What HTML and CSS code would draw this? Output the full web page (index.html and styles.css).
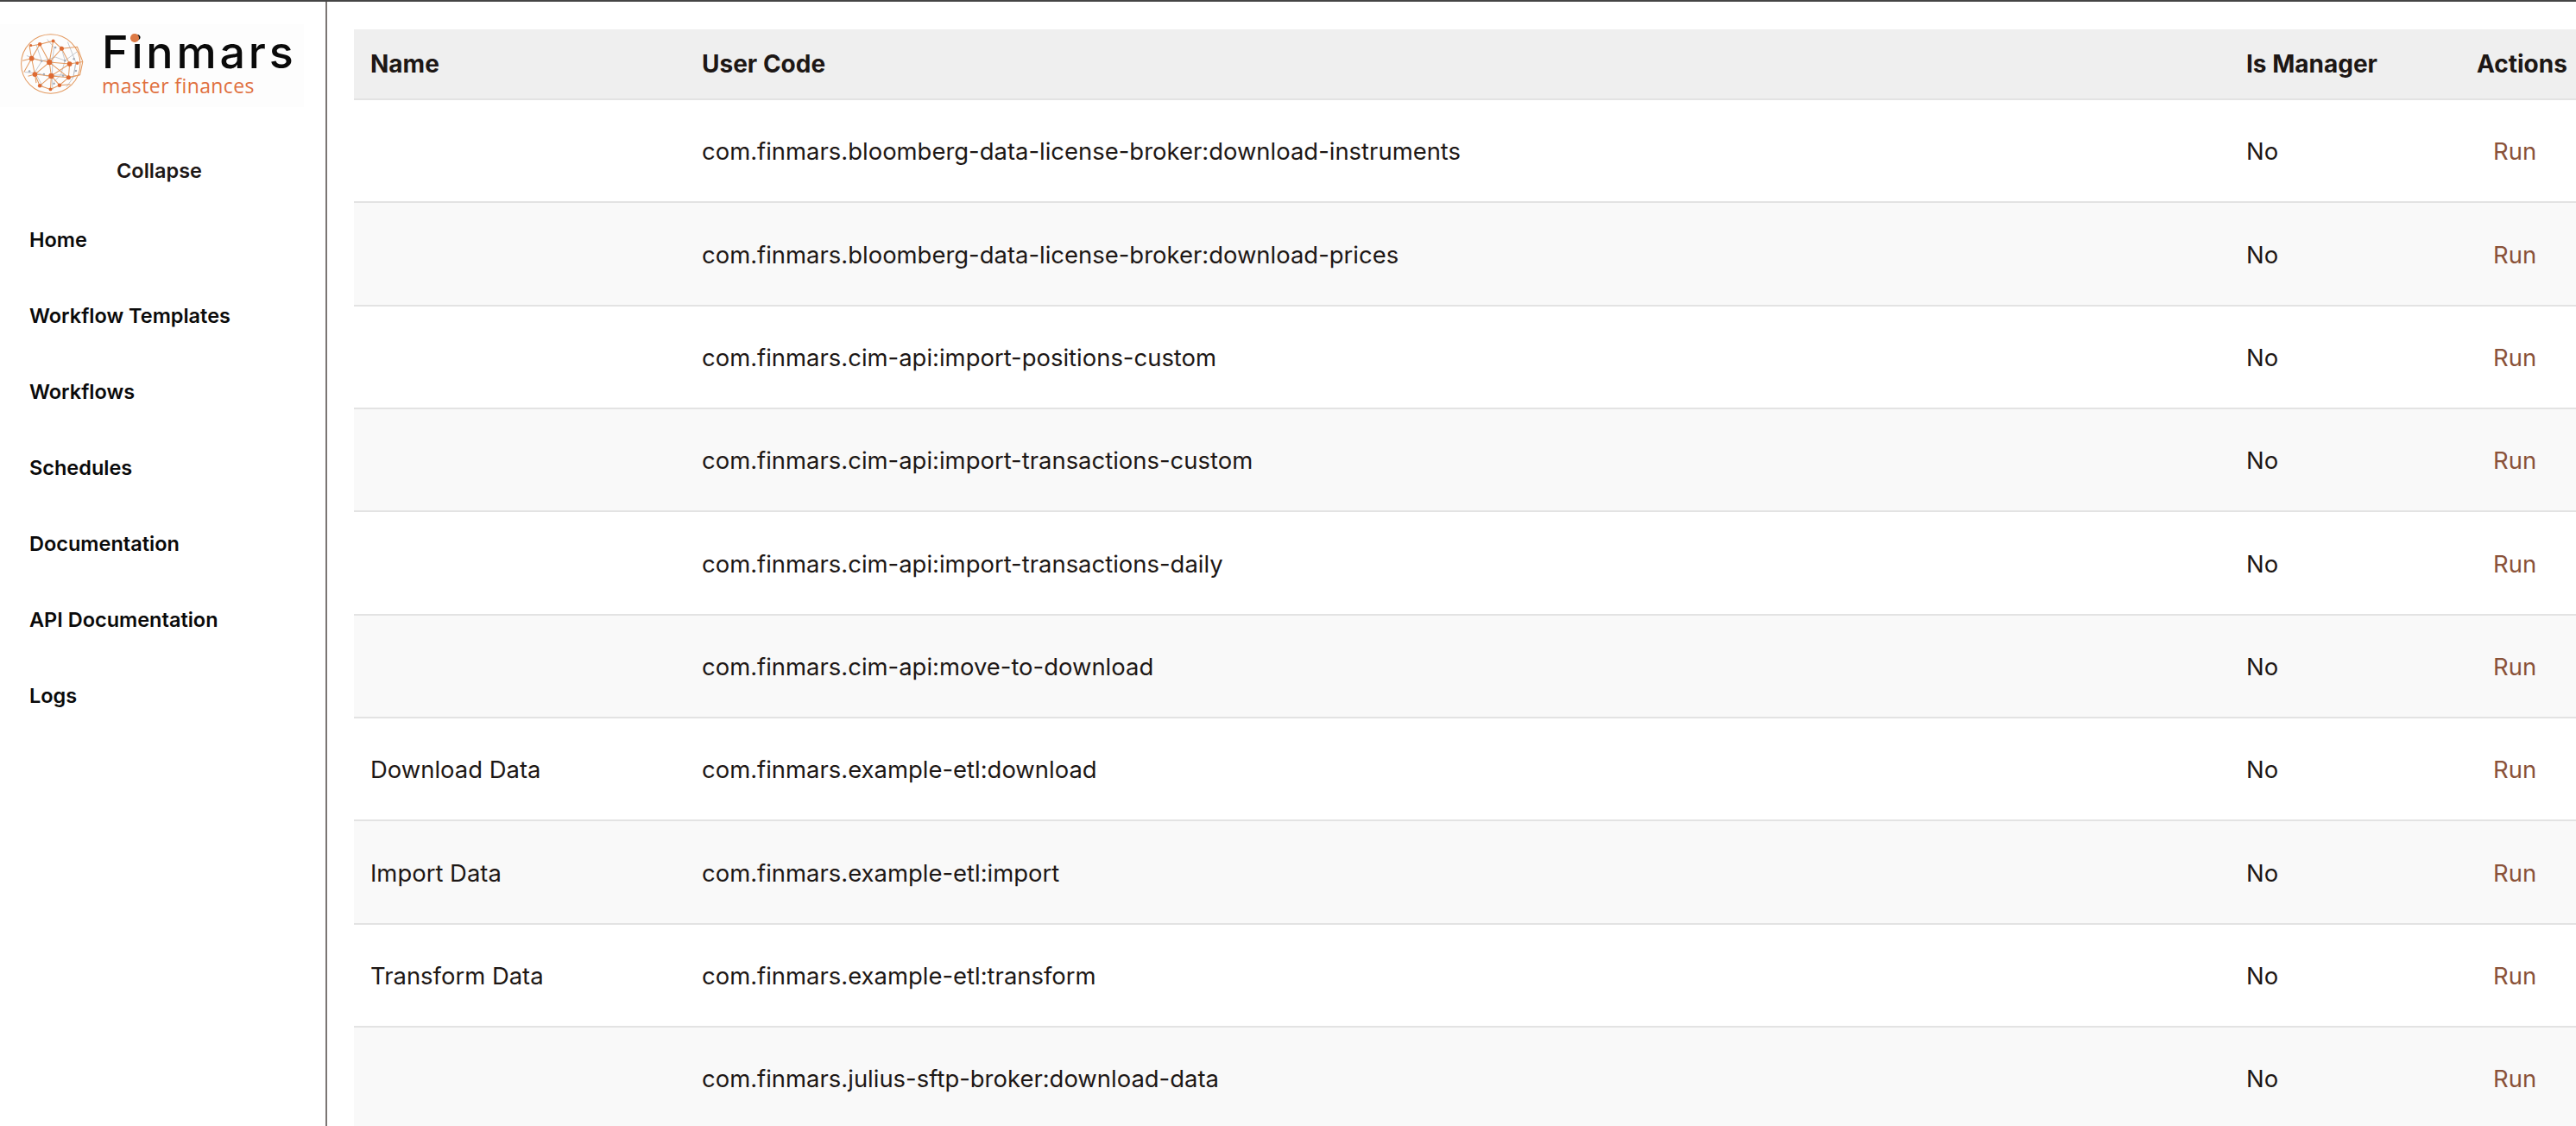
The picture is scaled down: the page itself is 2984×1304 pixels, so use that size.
FILE: index.html
```
<!DOCTYPE html>
<html lang="en">
<head>
<meta charset="utf-8">
<title>Finmars Workflow</title>
<link rel="stylesheet" href="styles.css">
</head>
<body>
<div class="app">
  <aside class="sidebar">
    <div class="logo">
      <svg class="globe" viewBox="0 0 240 240" xmlns="http://www.w3.org/2000/svg" aria-hidden="true">
        <g fill="none" stroke="#b9bdc5" stroke-width="2.6">
          <path d="M25 90L80 110L130 95L165 108L210 75"/>
          <path d="M18 150L70 155L100 165L150 160L195 170L205 115"/>
          <path d="M100 30L125 60L120 100L118 170L120 215"/>
          <path d="M60 50L80 110L55 150L85 205"/>
          <path d="M150 55L165 108L150 160L125 185"/>
          <path d="M175 40L205 115L195 170L170 205"/>
        </g>
        <g fill="none" stroke="#e3995f" stroke-width="3.2">
          <circle cx="113" cy="120" r="108"/>
          <path d="M10 108L43 100L108 114L182 120L230 112"/>
          <path d="M30 165L55 158L115 164L178 170L220 160"/>
          <path d="M35 55L73 48L122 36L153 64L182 120L178 170L145 198L112 213L73 200L55 158L43 100L73 48"/>
          <path d="M122 36L108 114L115 164L112 213"/>
          <path d="M153 64L108 114L55 158"/>
          <path d="M73 48L108 114L178 170"/>
          <path d="M153 64L210 58L230 112L220 160L178 170"/>
          <path d="M182 120L115 164L73 200"/>
          <path d="M115 164L145 198"/>
          <path d="M35 55L43 100L15 150M55 158L60 190M145 198L185 195"/>
        </g>
        <g fill="#dd6a33">
          <circle cx="43" cy="100" r="9"/><circle cx="108" cy="114" r="10"/><circle cx="182" cy="120" r="9"/>
          <circle cx="55" cy="158" r="9"/><circle cx="115" cy="164" r="10"/><circle cx="178" cy="170" r="8"/>
          <circle cx="73" cy="48" r="7"/><circle cx="153" cy="64" r="8"/><circle cx="122" cy="36" r="6"/>
          <circle cx="40" cy="52" r="5"/><circle cx="145" cy="198" r="7"/><circle cx="73" cy="200" r="7"/>
          <circle cx="112" cy="213" r="6"/><circle cx="210" cy="117" r="6"/>
        </g>
        <g fill="#a4aab4">
          <circle cx="80" cy="110" r="4"/><circle cx="165" cy="108" r="4"/><circle cx="198" cy="102" r="4"/>
          <circle cx="35" cy="147" r="4"/><circle cx="88" cy="158" r="4"/><circle cx="158" cy="163" r="4"/>
          <circle cx="205" cy="145" r="4"/><circle cx="130" cy="60" r="4"/><circle cx="125" cy="192" r="4"/>
        </g>
      </svg>
      <div class="brand">
        <div class="brand-name">Finmars<span class="brand-dot"></span></div>
        <div class="brand-tag">master finances</div>
      </div>
    </div>
    <div class="collapse">Collapse</div>
    <nav class="nav">
      <a class="nav-item">Home</a>
      <a class="nav-item">Workflow Templates</a>
      <a class="nav-item">Workflows</a>
      <a class="nav-item">Schedules</a>
      <a class="nav-item">Documentation</a>
      <a class="nav-item">API Documentation</a>
      <a class="nav-item">Logs</a>
    </nav>
  </aside>
  <main class="main">
    <div class="table">
      <div class="row head"><div>Name</div><div>User Code</div><div>Is Manager</div><div>Actions</div></div>
      <div class="row"><div></div><div>com.finmars.bloomberg-data-license-broker:download-instruments</div><div>No</div><div class="run">Run</div></div>
      <div class="row"><div></div><div>com.finmars.bloomberg-data-license-broker:download-prices</div><div>No</div><div class="run">Run</div></div>
      <div class="row"><div></div><div>com.finmars.cim-api:import-positions-custom</div><div>No</div><div class="run">Run</div></div>
      <div class="row"><div></div><div>com.finmars.cim-api:import-transactions-custom</div><div>No</div><div class="run">Run</div></div>
      <div class="row"><div></div><div>com.finmars.cim-api:import-transactions-daily</div><div>No</div><div class="run">Run</div></div>
      <div class="row"><div></div><div>com.finmars.cim-api:move-to-download</div><div>No</div><div class="run">Run</div></div>
      <div class="row"><div>Download Data</div><div>com.finmars.example-etl:download</div><div>No</div><div class="run">Run</div></div>
      <div class="row"><div>Import Data</div><div>com.finmars.example-etl:import</div><div>No</div><div class="run">Run</div></div>
      <div class="row"><div>Transform Data</div><div>com.finmars.example-etl:transform</div><div>No</div><div class="run">Run</div></div>
      <div class="row"><div></div><div>com.finmars.julius-sftp-broker:download-data</div><div>No</div><div class="run">Run</div></div>
    </div>
  </main>
</div>
</body>
</html>
```
FILE: styles.css
```
* { box-sizing: border-box; }
html, body { margin: 0; height: 100%; overflow: hidden; background: #fff; }
body { font-family: Inter, "Liberation Sans", sans-serif; color: #1d1715; font-size: 27.45px; }

.app { display: flex; height: 1304px; border-top: 2px solid #454545; }

.sidebar { flex: 0 0 379px; border-right: 2px solid #7b7674; }

.logo { display: flex; align-items: flex-start; gap: 19px; width: 352px; height: 96px; margin: 26px 0 0 0; padding: 8px 0 0 23px; background: #fdfdfd; }
.globe { width: 76px; height: 76px; flex: none; filter: blur(0.4px); }
.brand { position: relative; }
.brand-name { position: relative; font-size: 52px; line-height: 50px; font-weight: 500; letter-spacing: 3.8px; color: #0a0a0a; }
.brand-dot { position: absolute; left: 33px; top: 3px; width: 9.5px; height: 9.5px; border-radius: 50%; background: #dd7a45; }
.brand-tag { font-family: "Open Sans", sans-serif; font-size: 23px; line-height: 22px; color: #e0703f; letter-spacing: 0.4px; margin-top: 2px; }

.collapse { padding-right: 8px; text-align: center; font-size: 23.5px; font-weight: 600; line-height: 30px; margin-top: 59px; }

.nav { display: flex; flex-direction: column; margin-top: 50px; padding-left: 34px; gap: 58px; }
.nav-item { font-size: 23.5px; font-weight: 600; line-height: 30px; color: #0a0a0a; }

.main { flex: 1; min-width: 0; padding: 32px 0 0 31px; }

.row { display: grid; grid-template-columns: 384px 1789px 267px 134px; align-items: center; height: 119.35px; border-bottom: 2px solid #e3e3e3; }
.row:nth-child(odd) { background: #f9f9f9; }
.row > div { padding: 1px 0 0 19px; line-height: 34px; white-space: nowrap; }
.row.head { background: #efefef; height: 82px; font-size: 28px; font-weight: 700; }
.row.head > div { padding-top: 0; }
.row > .run { color: #8a5239; padding-left: 38px; }
```
